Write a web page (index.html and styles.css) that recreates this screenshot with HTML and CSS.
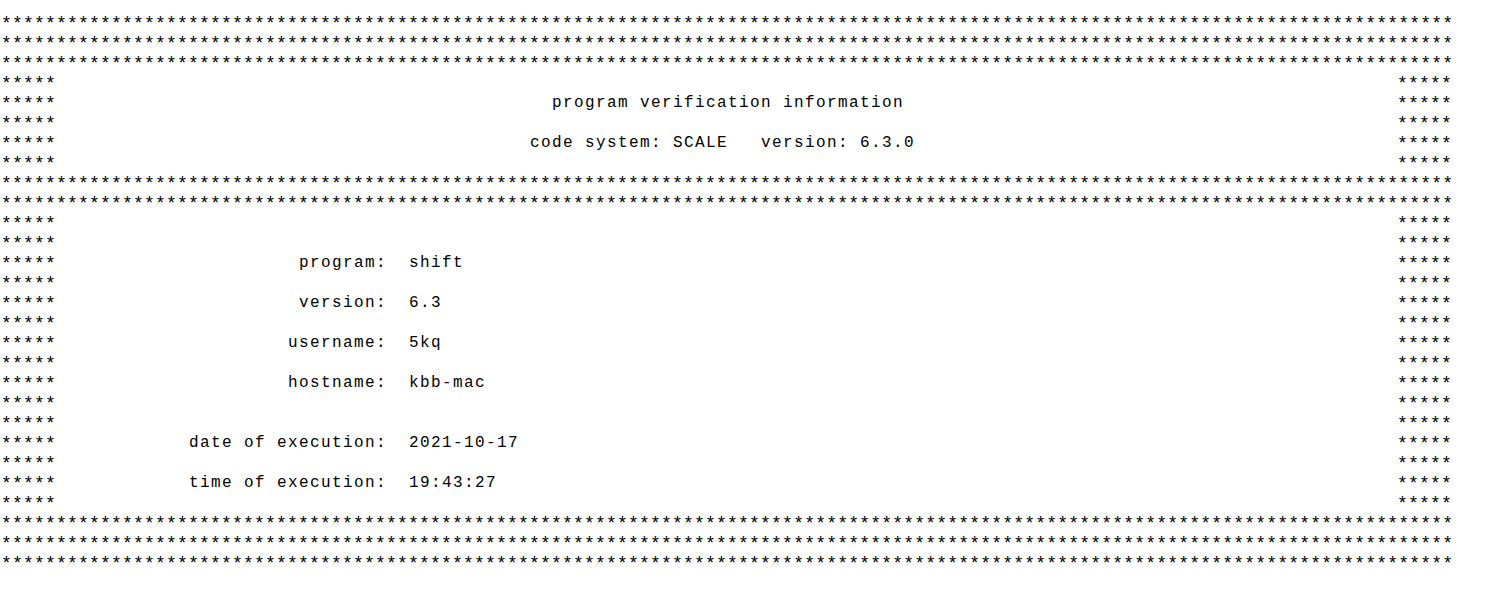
FILE: index.html
```html
<!DOCTYPE html>
<html lang="en">
<head>
<meta charset="utf-8">
<title>program verification information</title>
<link rel="stylesheet" href="styles.css">
</head>
<body>
<main class="banner">
  <div class="full">************************************************************************************************************************************</div>
  <div class="full">************************************************************************************************************************************</div>
  <div class="full">************************************************************************************************************************************</div>
  <div class="line"><span class="edge">*****</span><span class="mid"></span><span class="edge">*****</span></div>
  <div class="line"><span class="edge">*****</span><span class="mid title">program verification information</span><span class="edge">*****</span></div>
  <div class="line"><span class="edge">*****</span><span class="mid"></span><span class="edge">*****</span></div>
  <div class="line"><span class="edge">*****</span><span class="mid subtitle">code system: SCALE   version: 6.3.0</span><span class="edge">*****</span></div>
  <div class="line"><span class="edge">*****</span><span class="mid"></span><span class="edge">*****</span></div>
  <div class="full">************************************************************************************************************************************</div>
  <div class="full">************************************************************************************************************************************</div>
  <div class="line"><span class="edge">*****</span><span class="mid"></span><span class="edge">*****</span></div>
  <div class="line"><span class="edge">*****</span><span class="mid"></span><span class="edge">*****</span></div>
  <div class="line"><span class="edge">*****</span><span class="mid field"><span class="label">program:</span><span class="value">shift</span></span><span class="edge">*****</span></div>
  <div class="line"><span class="edge">*****</span><span class="mid"></span><span class="edge">*****</span></div>
  <div class="line"><span class="edge">*****</span><span class="mid field"><span class="label">version:</span><span class="value">6.3</span></span><span class="edge">*****</span></div>
  <div class="line"><span class="edge">*****</span><span class="mid"></span><span class="edge">*****</span></div>
  <div class="line"><span class="edge">*****</span><span class="mid field"><span class="label">username:</span><span class="value">5kq</span></span><span class="edge">*****</span></div>
  <div class="line"><span class="edge">*****</span><span class="mid"></span><span class="edge">*****</span></div>
  <div class="line"><span class="edge">*****</span><span class="mid field"><span class="label">hostname:</span><span class="value">kbb-mac</span></span><span class="edge">*****</span></div>
  <div class="line"><span class="edge">*****</span><span class="mid"></span><span class="edge">*****</span></div>
  <div class="line"><span class="edge">*****</span><span class="mid"></span><span class="edge">*****</span></div>
  <div class="line"><span class="edge">*****</span><span class="mid field"><span class="label">date of execution:</span><span class="value">2021-10-17</span></span><span class="edge">*****</span></div>
  <div class="line"><span class="edge">*****</span><span class="mid"></span><span class="edge">*****</span></div>
  <div class="line"><span class="edge">*****</span><span class="mid field"><span class="label">time of execution:</span><span class="value">19:43:27</span></span><span class="edge">*****</span></div>
  <div class="line"><span class="edge">*****</span><span class="mid"></span><span class="edge">*****</span></div>
  <div class="full">************************************************************************************************************************************</div>
  <div class="full">************************************************************************************************************************************</div>
  <div class="full">************************************************************************************************************************************</div>
</main>
</body>
</html>
```

FILE: styles.css
```css
:root {
  --cell: 11px;
}

html, body {
  margin: 0;
  padding: 0;
  background: #ffffff;
}

.banner {
  --glyph: 16px;
  display: flex;
  flex-direction: column;
  width: calc(132 * var(--cell));
  padding-top: 10px;
  font-family: "Liberation Mono", "DejaVu Sans Mono", monospace;
  font-size: var(--glyph);
  line-height: 20px;
  color: #000000;
  letter-spacing: calc(var(--cell) - 0.6 * var(--glyph));
}

.full,
.edge {
  font-size: 18px;
  letter-spacing: calc(var(--cell) - 10.8px);
  padding-left: 1px;
  padding-top: 4px;
  box-sizing: border-box;
  height: 20px;
  line-height: 20px;
  white-space: nowrap;
}

.line {
  display: flex;
  height: 20px;
}

.edge {
  flex: 0 0 calc(5 * var(--cell));
}

.mid {
  flex: 1 1 auto;
  min-width: 0;
  white-space: pre;
  padding-left: 1px;
  padding-top: 3px;
  box-sizing: border-box;
  height: 20px;
}

.title {
  padding-left: calc(45 * var(--cell) + 1px);
}

.subtitle {
  padding-left: calc(43 * var(--cell) + 1px);
}

.field {
  display: grid;
  grid-template-columns: calc(30 * var(--cell)) auto;
  column-gap: calc(2 * var(--cell));
  justify-content: start;
}

.label {
  text-align: right;
}
```
